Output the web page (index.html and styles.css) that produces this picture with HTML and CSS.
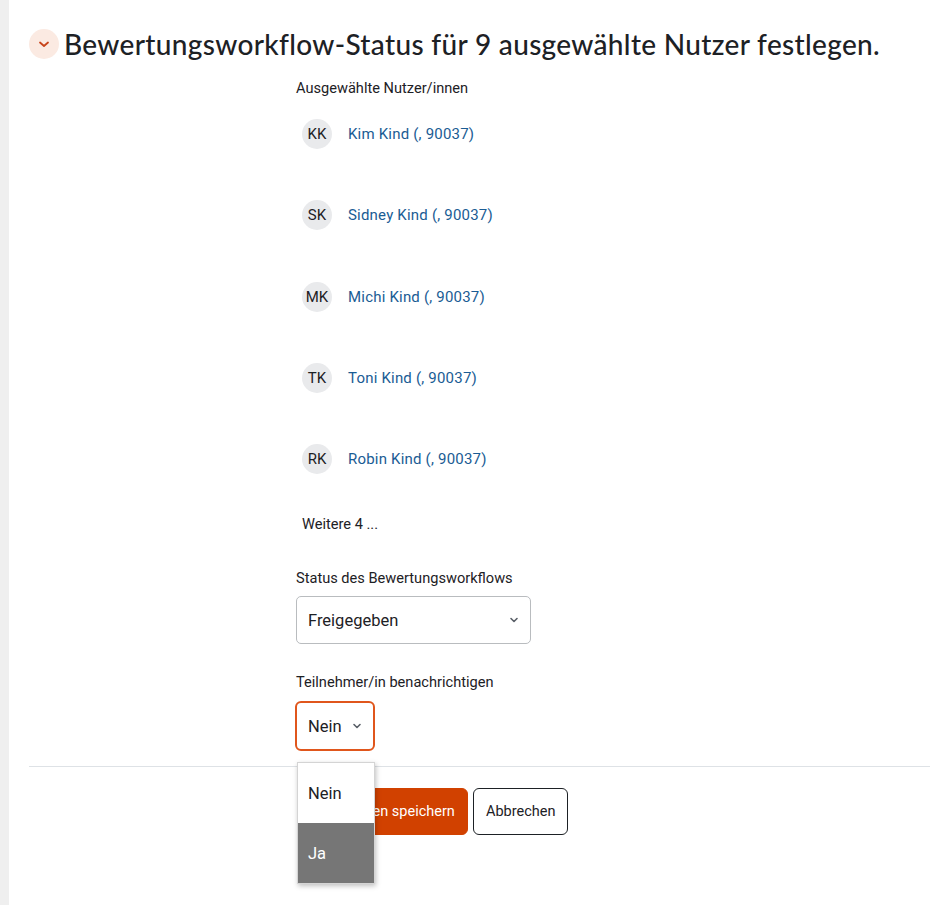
FILE: index.html
```html
<!DOCTYPE html>
<html lang="de">
<head>
    <meta charset="UTF-8">
    <meta name="viewport" content="width=device-width, initial-scale=1.0">
    <title>Bewertungsworkflow-Status</title>
    <link rel="stylesheet" href="styles.css">
</head>
<body>
    <div class="drawer"></div>

    <main class="page">
        <div class="heading">
            <span class="collapse-icon">
                <svg width="14" height="14" viewBox="0 0 14 14"><path d="M3 5.5 L7 9 L11 5.5" fill="none" stroke="#c8441b" stroke-width="1.8" stroke-linecap="round" stroke-linejoin="round"/></svg>
            </span>
            <h2>Bewertungsworkflow-Status für 9 ausgewählte Nutzer festlegen.</h2>
        </div>

        <form class="form">
            <div class="label first">Ausgewählte Nutzer/innen</div>

            <!-- Liste der ausgewählten Nutzer -->
            <ul class="users">
                <li><span class="avatar">KK</span><a href="#">Kim Kind (, 90037)</a></li>
                <li><span class="avatar">SK</span><a href="#">Sidney Kind (, 90037)</a></li>
                <li><span class="avatar">MK</span><a href="#">Michi Kind (, 90037)</a></li>
                <li><span class="avatar">TK</span><a href="#">Toni Kind (, 90037)</a></li>
                <li><span class="avatar">RK</span><a href="#">Robin Kind (, 90037)</a></li>
            </ul>
            <div class="more">Weitere 4 ...</div>

            <div class="label status-label">Status des Bewertungsworkflows</div>
            <div class="select wide">
                <span>Freigegeben</span>
                <svg class="caret" width="10" height="10" viewBox="0 0 10 10"><path d="M2 3.5 L5 6.5 L8 3.5" fill="none" stroke="#5a6068" stroke-width="1.6" stroke-linecap="round" stroke-linejoin="round"/></svg>
            </div>

            <div class="label notify-label">Teilnehmer/in benachrichtigen</div>
            <div class="select-wrap">
                <div class="select focused">
                    <span>Nein</span>
                    <svg class="caret" width="10" height="10" viewBox="0 0 10 10"><path d="M2 3.5 L5 6.5 L8 3.5" fill="none" stroke="#5a6068" stroke-width="1.6" stroke-linecap="round" stroke-linejoin="round"/></svg>
                </div>
                <!-- geöffnete Auswahlliste -->
                <ul class="options">
                    <li>Nein</li>
                    <li class="active">Ja</li>
                </ul>
            </div>
        </form>

        <hr class="divider">

        <div class="buttons">
            <button type="button" class="btn btn-primary">Änderungen speichern</button>
            <button type="button" class="btn btn-secondary">Abbrechen</button>
        </div>
    </main>
</body>
</html>
```

FILE: styles.css
```css
body {
    margin: 0;
    display: flex;
    min-height: 905px;
    font-family: Roboto, "Liberation Sans", Arial, sans-serif;
    font-size: 14.6px;
    color: #1d2125;
    background-color: #fff;
}
.drawer {
    width: 9px;
    flex-shrink: 0;
    background-color: #efefef;
}
.page {
    flex: 1;
    padding-left: 20px;
}
.heading {
    display: flex;
    align-items: center;
    gap: 5px;
    margin-top: 29px;
    height: 30px;
}
.collapse-icon {
    width: 30px;
    height: 30px;
    border-radius: 50%;
    background-color: #fbeae2;
    display: flex;
    align-items: center;
    justify-content: center;
    flex-shrink: 0;
}
.heading h2 {
    margin: 0;
    font-family: Lato, "Noto Sans", sans-serif;
    font-weight: 500;
    font-size: 28px;
    letter-spacing: 0.33px;
    color: #1d2125;
    white-space: nowrap;
}
.form {
    padding-left: 267px;
}
.label {
    line-height: 21px;
}
.label.first {
    margin-top: 19px;
}
.users {
    list-style: none;
    margin: 20px 0 0 6px;
    padding: 0;
}
.users li {
    display: flex;
    align-items: center;
    height: 30px;
    margin-bottom: 51.3px;
}
.users li:last-child {
    margin-bottom: 0;
}
.avatar {
    width: 30px;
    height: 30px;
    border-radius: 50%;
    background-color: #e9eaec;
    display: flex;
    align-items: center;
    justify-content: center;
    font-size: 15px;
    color: #1d2125;
    margin-right: 16px;
}
.users a {
    color: #1a5c94;
    text-decoration: none;
    font-size: 15px;
    letter-spacing: 0.2px;
}
.more {
    margin: 40px 0 0 6px;
    line-height: 21px;
}
.status-label {
    margin-top: 33px;
}
.select {
    display: flex;
    align-items: center;
    justify-content: space-between;
    box-sizing: border-box;
    border: 1px solid #b9bcbf;
    border-radius: 5px;
    padding: 0 11px 0 11px;
    font-size: 16.5px;
    background-color: #fff;
}
.select.wide {
    width: 235px;
    height: 48px;
    margin-top: 7px;
}
.notify-label {
    margin-top: 28px;
}
.select-wrap {
    position: relative;
    margin-top: 8px;
    width: 80px;
}
.select.focused {
    width: 80px;
    height: 50px;
    margin-left: -1px;
    border: 2px solid #e0561c;
    border-radius: 6px;
    padding-left: 11px;
    padding-right: 11px;
}
.caret {
    flex-shrink: 0;
}
.options {
    position: absolute;
    top: 61px;
    left: 1px;
    width: 76px;
    margin: 0;
    padding: 0;
    list-style: none;
    background-color: #fff;
    border: 1px solid #d4d4d4;
    box-shadow: 1px 2px 5px rgba(0, 0, 0, 0.25);
    font-size: 16.5px;
    z-index: 2;
}
.options li {
    height: 60px;
    display: flex;
    align-items: center;
    padding-left: 10px;
}
.options li.active {
    background-color: #767676;
    color: #fff;
}
.divider {
    border: none;
    border-top: 1px solid #dee2e6;
    margin: 15px 0 0 0;
}
.buttons {
    display: flex;
    gap: 5px;
    margin-top: 21px;
    padding-left: 268px;
}
.btn {
    height: 47px;
    padding: 0 12px;
    font-family: Roboto, "Liberation Sans", Arial, sans-serif;
    font-size: 14.5px;
    border-radius: 6px;
    cursor: pointer;
}
.btn-primary {
    width: 171px;
    background-color: #d14100;
    border: 1px solid #d14100;
    color: #fff;
}
.btn-secondary {
    width: 95px;
    background-color: #fff;
    border: 1px solid #1d2125;
    color: #1d2125;
}
```
